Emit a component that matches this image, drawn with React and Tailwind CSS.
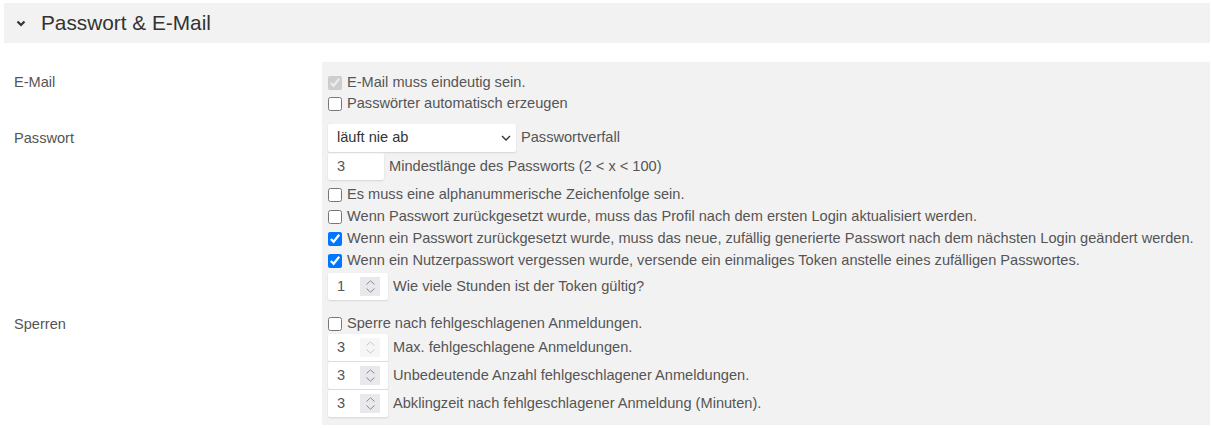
import { useState } from "react";

// Passwort & E-Mail settings section

function Chevron() {
  return (
    <svg width="10" height="7" viewBox="0 0 10 7" className="shrink-0">
      <path d="M1.5 1.5 L5 5 L8.5 1.5" fill="none" stroke="#333" strokeWidth="2.2" />
    </svg>
  );
}

function Spinner({ disabled }) {
  const c = disabled ? "#c8c8c8" : "#8a8a8a";
  return (
    <span className={`w-[20px] h-[19px] flex flex-col items-center justify-center gap-[3px] ${disabled ? "bg-[#f6f6f6]" : "bg-[#e9e9ed]"}`}>
      <svg width="9" height="5" viewBox="0 0 9 5">
        <path d="M0.5 4.5 L4.5 0.8 L8.5 4.5" fill="none" stroke={c} strokeWidth="1" />
      </svg>
      <svg width="9" height="5" viewBox="0 0 9 5">
        <path d="M0.5 0.5 L4.5 4.2 L8.5 0.5" fill="none" stroke={c} strokeWidth="1" />
      </svg>
    </span>
  );
}

function Check({ label, checked, disabled }) {
  const [on, setOn] = useState(!!checked);
  return (
    <label className="flex items-center h-[21px]">
      <input
        type="checkbox"
        checked={on}
        disabled={disabled}
        onChange={() => setOn(!on)}
        className="m-0 w-[14px] h-[14px] mr-[5px] accent-[#0075ff]"
      />
      <span className="whitespace-nowrap">{label}</span>
    </label>
  );
}

function NumberField({ value, label, disabled }) {
  return (
    <div className="flex items-center">
      <div className="w-[60px] h-[27px] bg-white shadow-[0_1px_2px_rgba(0,0,0,0.12)] rounded-[2px] flex items-center pl-[9px] pr-[8px] justify-between">
        <span>{value}</span>
        <Spinner disabled={disabled} />
      </div>
      <span className="ml-[5px] whitespace-nowrap">{label}</span>
    </div>
  );
}

const labelCls = "pl-[10px] text-[#555]";
const panelCls = "bg-[#f2f2f2] pl-[6px]";

export default function App() {
  return (
    <div
      className="w-[1211px] h-[428px] bg-white pl-[4px] pr-[1px] pt-[3px] text-[14.6px] text-[#555] overflow-hidden"
      style={{ fontFamily: '"Liberation Sans", Arial, sans-serif' }}
    >
      {/* header */}
      <div className="h-[40px] bg-[#f2f2f2] flex items-center pl-[12px] gap-[15px]">
        <Chevron />
        <span className="text-[20.8px] text-[#333]">Passwort &amp; E-Mail</span>
      </div>

      <div className="grid grid-cols-[318px_1fr] mt-[19px]">
        {/* E-Mail */}
        <div className={`${labelCls} pt-[10px] leading-[21px]`}>E-Mail</div>
        <div className={`${panelCls} pt-[10px]`}>
          <Check label="E-Mail muss eindeutig sein." checked disabled />
          <Check label="Passwörter automatisch erzeugen" />
        </div>

        {/* Passwort */}
        <div className={`${labelCls} pt-[10px] leading-[28px]`}>Passwort</div>
        <div className={`${panelCls} pt-[10px] pb-[2px]`}>
          <div className="flex items-center">
            <div className="relative w-[188px] h-[28px] bg-white shadow-[0_1px_2px_rgba(0,0,0,0.12)] rounded-[2px] flex items-center pl-[9px]">
              <span className="text-[#333]">läuft nie ab</span>
              <svg width="10" height="6" viewBox="0 0 10 6" className="absolute right-[5px] top-[11px]">
                <path d="M1 1 L5 5 L9 1" fill="none" stroke="#333" strokeWidth="1.4" />
              </svg>
            </div>
            <span className="ml-[5px]">Passwortverfall</span>
          </div>
          <div className="flex items-center mt-[1px]">
            <div className="w-[56px] h-[27px] bg-white shadow-[0_1px_2px_rgba(0,0,0,0.12)] rounded-[2px] flex items-center pl-[9px]">
              3
            </div>
            <span className="ml-[5px]">Mindestlänge des Passworts (2 &lt; x &lt; 100)</span>
          </div>
          <div className="mt-[4px] flex flex-col">
            <div className="h-[22px] flex items-center"><Check label="Es muss eine alphanummerische Zeichenfolge sein." /></div>
            <div className="h-[22px] flex items-center"><Check label="Wenn Passwort zurückgesetzt wurde, muss das Profil nach dem ersten Login aktualisiert werden." /></div>
            <div className="h-[22px] flex items-center"><Check label="Wenn ein Passwort zurückgesetzt wurde, muss das neue, zufällig generierte Passwort nach dem nächsten Login geändert werden." checked /></div>
            <div className="h-[22px] flex items-center"><Check label="Wenn ein Nutzerpasswort vergessen wurde, versende ein einmaliges Token anstelle eines zufälligen Passwortes." checked /></div>
          </div>
          <div className="mt-[1px]">
            <NumberField value="1" label="Wie viele Stunden ist der Token gültig?" />
          </div>
        </div>

        {/* Sperren */}
        <div className={`${labelCls} pt-[11px] leading-[22px]`}>Sperren</div>
        <div className={`${panelCls} pt-[11px] pb-[8px] flex flex-col`}>
          <div className="h-[22px] flex items-center"><Check label="Sperre nach fehlgeschlagenen Anmeldungen." /></div>
          <div className="flex flex-col gap-[1px] mt-[-1px]">
            <NumberField value="3" label="Max. fehlgeschlagene Anmeldungen." disabled />
            <NumberField value="3" label="Unbedeutende Anzahl fehlgeschlagener Anmeldungen." />
            <NumberField value="3" label="Abklingzeit nach fehlgeschlagener Anmeldung (Minuten)." />
          </div>
        </div>
      </div>
    </div>
  );
}
